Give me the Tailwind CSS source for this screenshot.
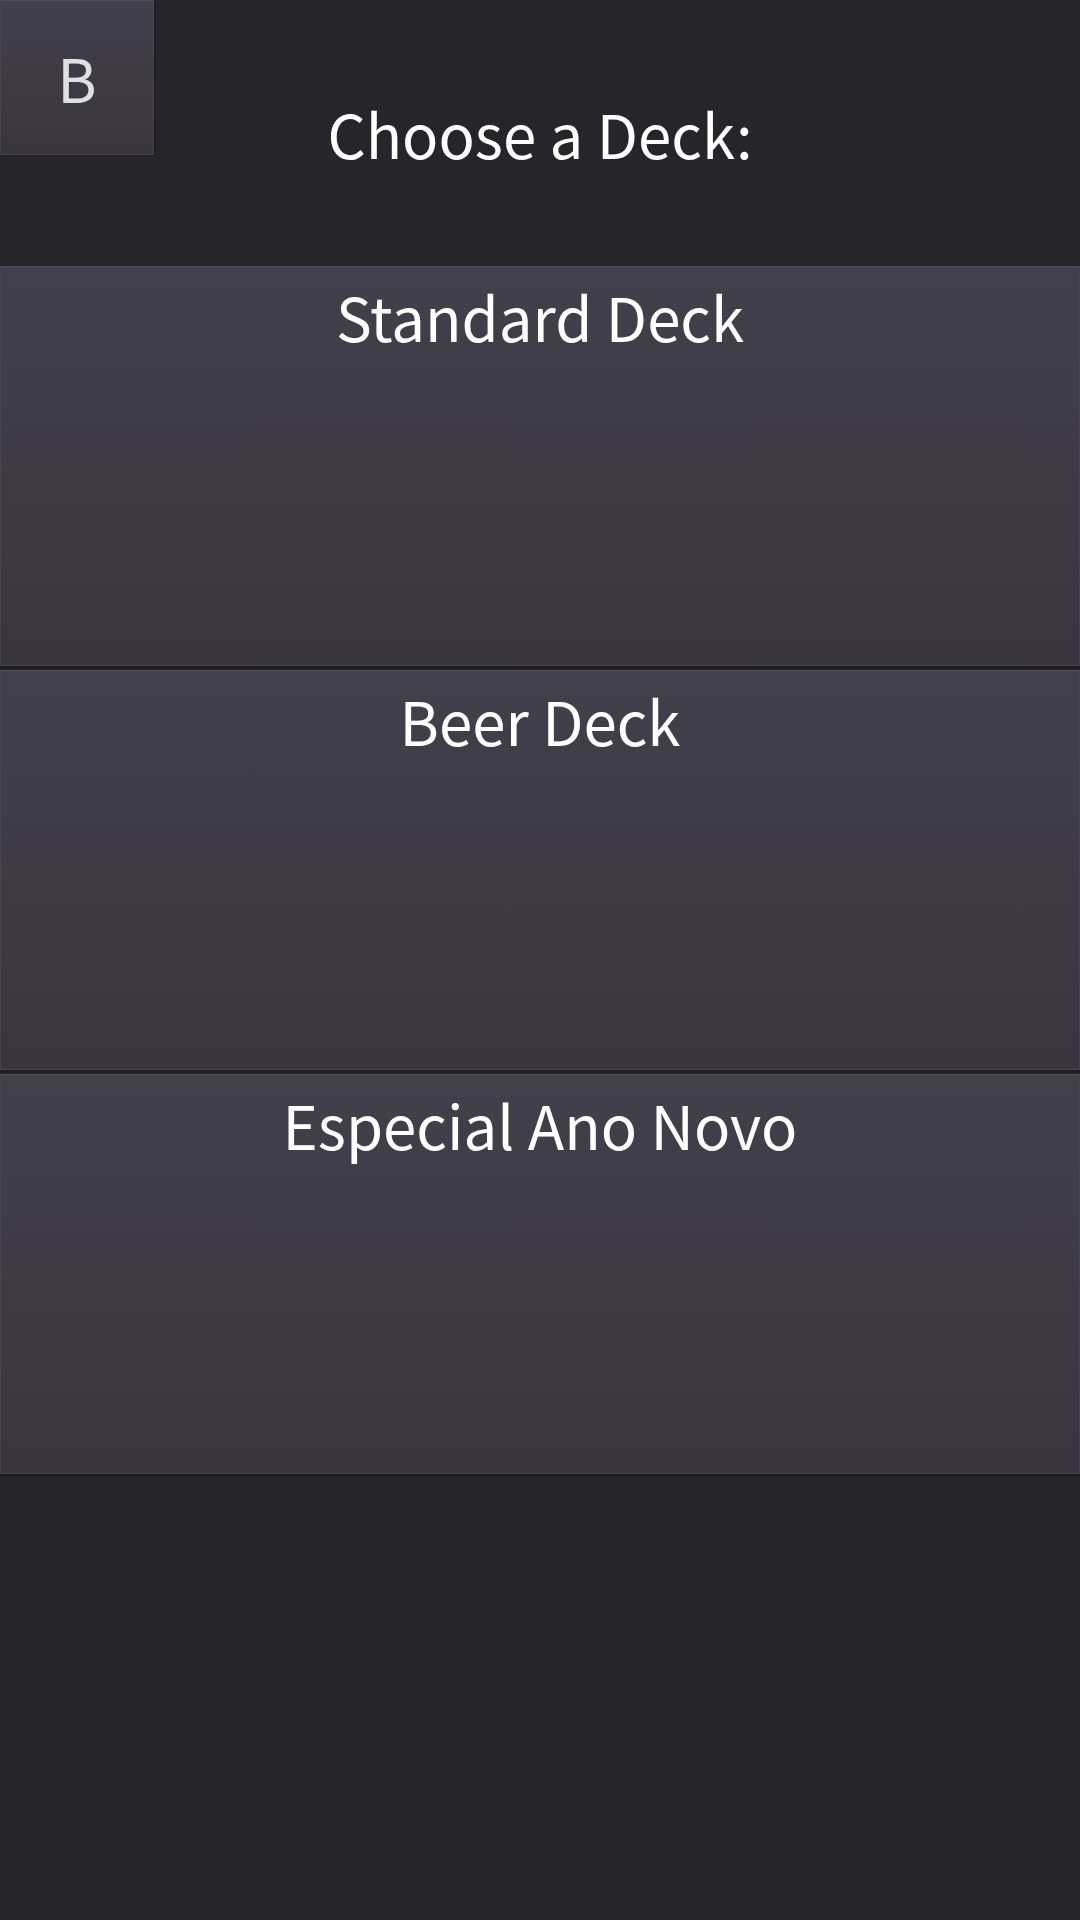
<!DOCTYPE html>
<html lang="en">
<head>
<meta charset="utf-8">
<meta name="viewport" content="width=device-width, initial-scale=1">
<title>Choose a Deck</title>
<script src="https://cdn.jsdelivr.net/npm/@tailwindcss/browser@4"></script>
</head>
<body class="min-h-screen bg-[#262529] font-['Noto_Sans_CJK_SC',sans-serif] text-[60px] leading-[88px] text-white">
<header class="relative pt-[89px] pb-[89px]">
  <button type="button" aria-label="Back (B)" class="absolute top-0 left-0 flex h-[155px] w-[154px] items-center justify-center border border-t-[#504e59] border-x-[#47454f] border-b-[#47454f] bg-linear-to-b from-[#42404a] to-[#38353e] pb-[2px] text-[#e0e0e0] shadow-[0_0_2px_1px_#1e1d20]">B</button>
  <h1 class="text-center">Choose a Deck:</h1>
</header>
<main class="flex flex-col gap-1">
  <button type="button" class="flex h-[400px] w-full items-start justify-center border border-t-[#504e59] border-x-[#47454f] border-b-[#47454f] bg-linear-to-b from-[#42404a] to-[#38353e] pt-[5px] shadow-[0_1px_2px_1px_#1c1b1e]">Standard Deck</button>
  <button type="button" class="flex h-[400px] w-full items-start justify-center border border-t-[#504e59] border-x-[#47454f] border-b-[#47454f] bg-linear-to-b from-[#42404a] to-[#38353e] pt-[5px] shadow-[0_1px_2px_1px_#1c1b1e]">Beer Deck</button>
  <button type="button" class="flex h-[400px] w-full items-start justify-center border border-t-[#504e59] border-x-[#47454f] border-b-[#47454f] bg-linear-to-b from-[#42404a] to-[#38353e] pt-[5px] shadow-[0_1px_2px_1px_#1c1b1e]">Especial Ano Novo</button>
</main>
</body>
</html>
